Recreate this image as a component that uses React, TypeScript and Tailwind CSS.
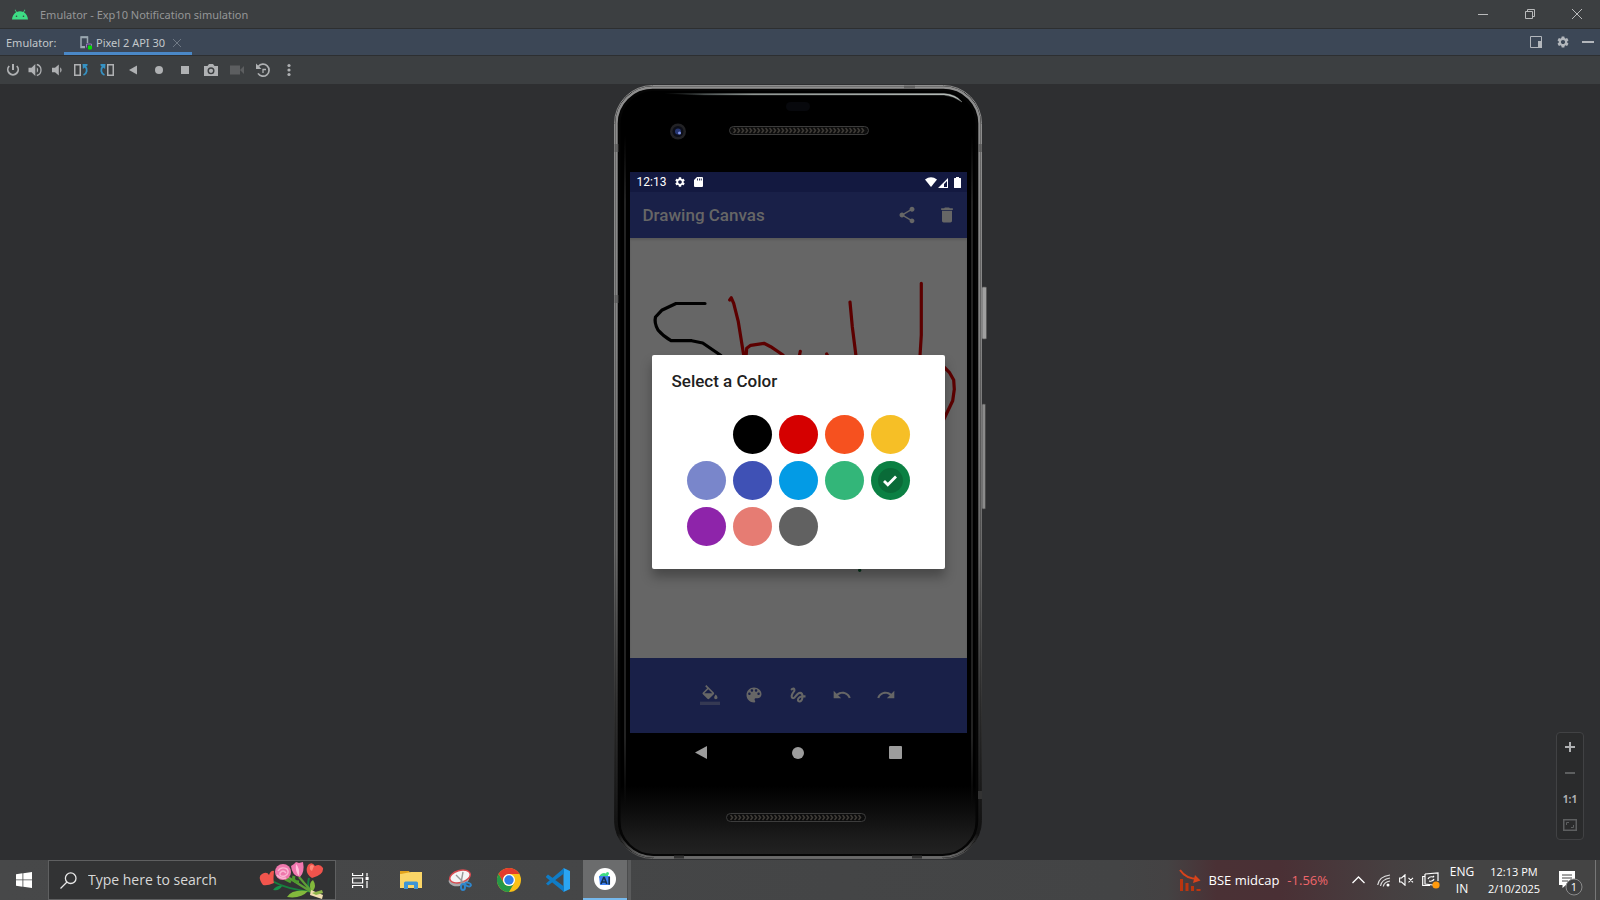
import React from "react";
import { MdDelete, MdGesture, MdRedo, MdSettings, MdShare, MdUndo } from "react-icons/md";

const swatches = [
  { name: "White", color: "bg-white" },
  { name: "Black", color: "bg-black" },
  { name: "Red", color: "bg-[#d50000]" },
  { name: "Orange", color: "bg-[#f6511f]" },
  { name: "Yellow", color: "bg-[#f6bf26]" },
  { name: "Lavender", color: "bg-[#7986cb]" },
  { name: "Indigo", color: "bg-[#3f51b5]" },
  { name: "Blue", color: "bg-[#039be5]" },
  { name: "Mint", color: "bg-[#33b679]" },
  { name: "Green", color: "bg-[#0b8043]", selected: true },
  { name: "Purple", color: "bg-[#8e24aa]" },
  { name: "Salmon", color: "bg-[#e67c73]" },
  { name: "Graphite", color: "bg-[#616161]" },
];

function AndroidLogo() {
  return (
    <svg width="16" height="11" viewBox="0 0 16 11" aria-hidden="true">
      <path d="M0 10.500C.2 7.300 1.800 4.700 4.100 3.300L2.700.9l.6-.4 1.500 2.500a8 8 0 0 1 6.400 0L12.700.5l.6.4-1.400 2.400c2.300 1.400 3.900 4 4.100 7.200z" fill="#3ddc84" />
      <circle cx="4.500" cy="7.200" r=".8" fill="#3c3f41" />
      <circle cx="11.500" cy="7.200" r=".8" fill="#3c3f41" />
    </svg>
  );
}

function TitleBar() {
  return (
    <header className="flex h-[29px] items-center border-b border-[#2d2f30] bg-[#3c3f41] pl-3">
      <AndroidLogo />
      <h1 className="ml-3 flex-1 pt-px font-['Noto_Sans',sans-serif] text-[11px] leading-4 text-[#959697]">Emulator - Exp10 Notification simulation</h1>
      <button type="button" aria-label="Minimize window" className="flex h-7 w-[47px] items-center justify-center">
        <span className="h-px w-2.5 bg-[#b9babb]" />
      </button>
      <button type="button" aria-label="Restore window" className="flex h-7 w-[47px] items-center justify-center">
        <svg width="10" height="10" viewBox="0 0 10 10" fill="none" stroke="#b9babb">
          <path d="M.5 2.500h7v7h-7zM2.500 2.500v-2h7v7h-2" />
        </svg>
      </button>
      <button type="button" aria-label="Close window" className="flex h-7 w-[47px] items-center justify-center">
        <svg width="10" height="10" viewBox="0 0 10 10" fill="none" stroke="#b9babb">
          <path d="M0 0l10 10M10 0L0 10" />
        </svg>
      </button>
    </header>
  );
}

function TabBar() {
  return (
    <div className="flex h-[27px] items-stretch border-b border-[#2d2f31] bg-[#3c4756] font-['Noto_Sans',sans-serif] text-[11px] leading-4 text-[#c3c7cb]">
      <span className="flex w-16 items-center pl-1.5 pt-0.5">Emulator:</span>
      <div className="flex w-32 items-center border-b-[3px] border-[#4a88c7] pl-4 pt-[5px]">
        <svg width="12" height="14" viewBox="0 0 12 14" aria-hidden="true">
          <path d="M5 11.500H1V1h6.500v6" fill="none" stroke="#9aa7b0" strokeWidth="1.500" />
          <path d="M1 .5h7v1.700H1zM1 10h4v2H1z" fill="#9aa7b0" />
          <path d="M6.500 11.500v-3.500h5v3" fill="none" stroke="#9a6fc0" />
          <rect x="8" y="9.500" width="4" height="4" rx="1" fill="#00e000" />
        </svg>
        <span className="ml-1 flex-1 whitespace-nowrap">Pixel 2 API 30</span>
        <button type="button" aria-label="Close tab" className="mr-2.5 p-px">
          <svg width="8" height="8" viewBox="0 0 8 8" stroke="#6f7985">
            <path d="M0 0l8 8M8 0L0 8" />
          </svg>
        </button>
      </div>
      <div className="flex-1" />
      <div className="flex items-center gap-3.5 pr-1.5">
        <button type="button" aria-label="Window layout">
          <svg width="12" height="12" viewBox="0 0 12 12">
            <path d="M.5.5h11v11H.5z" fill="none" stroke="#b3b7bc" />
            <path d="M8 5h4v7H8z" fill="#b3b7bc" />
          </svg>
        </button>
        <button type="button" aria-label="Settings" className="-mr-0.5">
          <MdSettings className="size-3.5 text-[#b3b7bc]" />
        </button>
        <button type="button" aria-label="Hide" className="py-2">
          <span className="block h-0.5 w-3 bg-[#b3b7bc]" />
        </button>
      </div>
    </div>
  );
}

function ToolButton({ label, children }: { label: string; children: React.ReactNode }) {
  return (
    <button type="button" aria-label={label} className="flex size-4 items-center justify-center">
      <svg width="16" height="16" viewBox="0 0 16 16" fill="#afb1b3">
        {children}
      </svg>
    </button>
  );
}

function EmulatorToolbar() {
  return (
    <div className="flex h-7 items-center gap-2.5 bg-[#3c3f41] pl-[5px]">
      <div className="-mr-0.5 flex items-center gap-1.5">
        <ToolButton label="Power">
          <path d="M7 2h2v6H7z" />
          <path d="M4.200 4a5.200 5.200 0 1 0 7.600 0" fill="none" stroke="#afb1b3" strokeWidth="1.800" />
        </ToolButton>
        <ToolButton label="Volume up">
          <path d="M1.500 5.700h3L8.300 2v12L4.500 10.300h-3z" />
          <path d="M9.800 5.300a3.300 3.300 0 0 1 0 5.400z" />
          <path d="M9.800 2.500a5.700 5.700 0 0 1 0 11" fill="none" stroke="#afb1b3" strokeWidth="1.300" />
        </ToolButton>
        <ToolButton label="Volume down">
          <path d="M3 5.700h3L9.800 2.500v11L6 10.300H3z" />
          <path d="M11.200 5.300a3.300 3.300 0 0 1 0 5.400z" />
        </ToolButton>
      </div>
      <ToolButton label="Rotate left">
        <path d="M1.750 2.750h5.500v10.500h-5.500z" fill="none" stroke="#afb1b3" strokeWidth="1.500" />
        <path d="M10.500 13c3.700-1.600 4.300-6 1.400-9" fill="none" stroke="#3592c4" strokeWidth="1.800" />
        <path d="M9.500 2h5v1.600L9.900 7z" fill="#3592c4" />
      </ToolButton>
      <ToolButton label="Rotate right">
        <path d="M8.750 2.750h5.500v10.500h-5.500z" fill="none" stroke="#afb1b3" strokeWidth="1.500" />
        <path d="M5.500 13C1.800 11.400 1.200 7 4.100 4" fill="none" stroke="#3592c4" strokeWidth="1.800" />
        <path d="M6.500 2h-5v1.600L6.100 7z" fill="#3592c4" />
      </ToolButton>
      <ToolButton label="Back"><path d="M4 8l8-4.500v9z" /></ToolButton>
      <ToolButton label="Home"><circle cx="8" cy="8" r="4" /></ToolButton>
      <ToolButton label="Overview"><path d="M4 4h8v8H4z" /></ToolButton>
      <ToolButton label="Take screenshot">
        <path fillRule="evenodd" d="M1 4h3.500L6 2h4l1.500 2H15v10H1zM8 5.300a3.500 3.500 0 1 0 0 7 3.500 3.500 0 0 0 0-7z" />
        <circle cx="8" cy="8.800" r="2.100" />
      </ToolButton>
      <ToolButton label="Record screen">
        <path d="M1 3.500h10v9H1zM11 8l4-4v8z" fill="#5c5e60" />
      </ToolButton>
      <ToolButton label="Snapshots">
        <path d="M3.300 4.500A6 6 0 1 1 3 11.400" fill="none" stroke="#afb1b3" strokeWidth="1.700" />
        <path d="M1 1.500v5.500h5.500z" />
        <path d="M8 11V7.500h3" fill="none" stroke="#afb1b3" strokeWidth="1.300" />
      </ToolButton>
      <ToolButton label="More">
        <circle cx="8" cy="3.500" r="1.600" /><circle cx="8" cy="8" r="1.600" /><circle cx="8" cy="12.500" r="1.600" />
      </ToolButton>
    </div>
  );
}

function Speaker() {
  return (
    <svg width="140" height="9" viewBox="0 0 140 9" aria-hidden="true">
      <defs>
        <pattern id="mesh" width="4" height="9" patternUnits="userSpaceOnUse">
          <path d="M.5 2l2 2.500-2 2.500" fill="none" stroke="#3f3c37" strokeWidth="1.500" />
        </pattern>
      </defs>
      <rect x=".5" y=".5" width="139" height="8" rx="4" fill="#0c0c0c" stroke="#3c3c3c" />
      <rect x="4" y="0" width="132" height="9" fill="url(#mesh)" />
    </svg>
  );
}

function PhoneBody() {
  return (
    <svg className="absolute inset-0" width="373" height="775" viewBox="0 0 373 775" aria-hidden="true">
      <defs>
        <linearGradient id="rim" x1="0" y1="0" x2="0" y2="1">
          <stop offset="0" stopColor="#8e8e8e" />
          <stop offset=".3" stopColor="#858585" />
          <stop offset=".6" stopColor="#6a6a6a" />
          <stop offset=".8" stopColor="#333" />
          <stop offset=".97" stopColor="#111" />
          <stop offset="1" stopColor="#666" />
        </linearGradient>
        <linearGradient id="glass" x1="0" y1="0" x2="0" y2="1">
          <stop offset=".91" stopColor="#000" />
          <stop offset=".98" stopColor="#1c1c1c" />
          <stop offset="1" stopColor="#222" />
        </linearGradient>
        <linearGradient id="edge" x1="0" y1="0" x2="0" y2="1">
          <stop offset="0" stopColor="#222" stopOpacity="0" />
          <stop offset=".1" stopColor="#222" />
          <stop offset=".9" stopColor="#222" />
          <stop offset="1" stopColor="#222" stopOpacity="0" />
        </linearGradient>
        <linearGradient id="shine" x1="0" x2="1">
          <stop offset="0" stopColor="#9aa" stopOpacity="0" />
          <stop offset=".3" stopColor="#8e9491" />
          <stop offset="1" stopColor="#b5bbb8" />
        </linearGradient>
      </defs>
      <rect x="368" y="202" width="4.500" height="52" rx="1" fill="#a0a0a0" stroke="#555" strokeWidth=".7" />
      <rect x="368" y="319" width="3.500" height="105" rx="1" fill="#8b8b8b" stroke="#444" strokeWidth=".7" />
      <rect x=".5" y=".5" width="367" height="773" rx="38" fill="#111" stroke="url(#rim)" />
      <rect x="2.500" y="2.500" width="363" height="769" rx="36" fill="#050505" stroke="url(#rim)" strokeWidth="2.400" />
      <rect x="5.500" y="5" width="357" height="765" rx="34" fill="url(#glass)" stroke="#050505" strokeWidth="2" />
      <path d="M10 50h2v670h-2zM357 50h2v670h-2z" fill="url(#edge)" />
      <path d="M50 8.500h280q12 .5 18 8.500q-8-6-18-7H90z" fill="url(#shine)" stroke="url(#shine)" strokeWidth=".3" />
      <path d="M.5 59h4v8h-4zM.5 210h4v8h-4zM364 59h4v8h-4zM290 .5h11v3h-11z" fill="#555" fillOpacity=".7" />
      <path d="M364 706h4v8h-4z" fill="#333" />
      <path d="M40 772.500h288" stroke="#6a6a6a" />
      <path d="M60 770.500h10v3H60zM298 770.500h10v3h-10z" fill="#333" />
      <rect x="172" y="17" width="24" height="9" rx="4.500" fill="#07080c" />
      <circle cx="64" cy="46.500" r="8" fill="#222225" />
      <circle cx="64" cy="46.500" r="5.500" fill="#0c0e18" />
      <circle cx="64" cy="46.500" r="3" fill="#263672" />
      <circle cx="65.500" cy="48" r="1.500" fill="#8093e8" />
    </svg>
  );
}

function StatusBar() {
  return (
    <div className="flex h-5 items-center bg-[#131940] pl-[7px] pr-1.5 text-white">
      <span className="font-[Roboto] text-[12px] leading-4">12:13</span>
      <MdSettings className="ml-2 size-3" />
      <svg className="ml-2" width="9" height="10" viewBox="0 0 9 10" fill="#fff" aria-hidden="true">
        <path fillRule="evenodd" d="M3 0h5q1 0 1 1v8q0 1-1 1H1q-1 0-1-1V3zM3 1.500v2h.9v-2zM5 1.500v2h.9v-2zM6.800 1.500v2h.9v-2z" />
      </svg>
      <svg className="ml-auto" width="36" height="11" viewBox="0 0 36 11" fill="#fff" aria-label="Wi-Fi, signal and battery">
        <path d="M0 2.500q6-4.500 12 0L6 10z" />
        <path fillRule="evenodd" d="M13 11L23 1v10zM19 10h3V4l-3 3z" />
        <path d="M31 0h3v1h1.500q.5 0 .5.5v9q0 .5-.5.5h-6q-.5 0-.5-.5v-9q0-.5.5-.5H31z" />
      </svg>
    </div>
  );
}

function CanvasDrawing() {
  return (
    <svg className="absolute inset-0" width="337" height="420" viewBox="0 0 337 420" fill="none" stroke="#5c0000" strokeWidth="3.200" strokeLinecap="round" strokeLinejoin="round" aria-hidden="true">
      <path stroke="#000" d="M75 65.500H46L31.700 72.300 25.500 79Q24 85 28 92 33 98 41 102.700H61.700L72.700 105 91 117.500" />
      <path d="M99.700 62l1.600-2.200 2.400 5.500 4.600 18.400L114 119M116 119l.7-8.700 4-3 13.300-2 6.700 3.400L153 117M170.300 113.300l-1 5M196.700 116l1 2M220 64l2.300 24.700L226 118M291.300 45.300V97L290 118M312 127l7.300 7.300 4.400 7.700.6 9.300-1.600 11.400L313 183" />
      <path stroke="#06351c" d="M229.700 332v.3" />
    </svg>
  );
}

function ColorDialog() {
  return (
    <section role="dialog" aria-label="Select a Color" className="relative mt-[117px] h-[214px] w-[293px] rounded-[2px] bg-white px-5 pt-4 shadow-[0_8px_12px_rgba(0,0,0,0.3)]">
      <h2 className="font-[Roboto] text-[17px] font-medium leading-5 text-[#212121]">Select a Color</h2>
      <div className="mt-6 grid grid-cols-[repeat(5,39px)] justify-center gap-[7px]">
        {swatches.map((s) => (
          <button key={s.name} type="button" aria-label={s.name} aria-pressed={!!s.selected} className={`flex size-[39px] items-center justify-center rounded-full ${s.color}`}>
            {s.selected && (
              <span className="flex size-[25px] items-center justify-center rounded-full bg-[#0a6b38]">
                <svg width="14" height="12" viewBox="0 0 14 12" fill="none" stroke="#fff" strokeWidth="2.800">
                  <path d="M1 6l3.800 3.800L13 1.600" />
                </svg>
              </span>
            )}
          </button>
        ))}
      </div>
    </section>
  );
}

function DrawTool({ label, children }: { label: string; children: React.ReactNode }) {
  return (
    <button type="button" aria-label={label} className="flex h-11 w-11 items-center justify-center text-[#666]">
      {children}
    </button>
  );
}

function DrawingApp() {
  return (
    <div className="flex flex-col font-[Roboto]">
      <StatusBar />
      <div className="flex h-[46px] items-center bg-[#192048] pl-[13px] pr-2.5 text-[#666]">
        <h2 className="flex-1 text-[17px] font-medium leading-5">Drawing Canvas</h2>
        <button type="button" aria-label="Share"><MdShare className="size-5" /></button>
        <button type="button" aria-label="Delete" className="ml-5"><MdDelete className="size-5" /></button>
      </div>
      <div className="relative flex h-[420px] justify-center bg-[#666] shadow-[inset_0_2px_2px_rgba(0,0,0,0.12)]">
        <CanvasDrawing />
        <ColorDialog />
      </div>
      <div className="flex h-[75px] items-center justify-center bg-[#192048] pb-0.5">
        <DrawTool label="Background color">
          <svg width="20" height="20" viewBox="0 0 24 24" fill="currentColor">
            <path d="M16.560 8.940L7.620 0 6.210 1.410l2.380 2.380-5.150 5.150c-.59.59-.59 1.540 0 2.120l5.500 5.500c.29.29.68.44 1.060.44s.77-.15 1.060-.44l5.500-5.500c.59-.58.59-1.530 0-2.120zM5.210 10L10 5.210 14.790 10H5.210zM19 11.500s-2 2.170-2 3.500c0 1.100.9 2 2 2s2-.9 2-2c0-1.330-2-3.500-2-3.500z" />
            <path fillOpacity=".36" d="M0 20h24v4H0z" />
          </svg>
        </DrawTool>
        <DrawTool label="Brush color">
          <svg width="20" height="20" viewBox="0 0 24 24" fill="currentColor">
            <path d="M12 3c-4.970 0-9 4.030-9 9s4.030 9 9 9c.83 0 1.500-.67 1.500-1.500 0-.39-.15-.74-.39-1.010-.23-.26-.38-.61-.38-.99 0-.83.67-1.500 1.500-1.500H16c2.760 0 5-2.240 5-5 0-4.420-4.030-8-9-8zm-5.500 9c-.83 0-1.500-.67-1.500-1.500S5.670 9 6.500 9 8 9.670 8 10.500 7.330 12 6.500 12zm3-4C8.670 8 8 7.330 8 6.500S8.670 5 9.500 5s1.500.67 1.500 1.500S10.330 8 9.500 8zm5 0c-.83 0-1.500-.67-1.500-1.500S13.670 5 14.500 5s1.500.67 1.500 1.500S15.330 8 14.500 8zm3 4c-.83 0-1.500-.67-1.500-1.500S16.670 9 17.500 9s1.500.67 1.500 1.500-.67 1.500-1.500 1.500z" />
          </svg>
        </DrawTool>
        <DrawTool label="Brush size"><MdGesture className="size-5" /></DrawTool>
        <DrawTool label="Undo"><MdUndo className="size-5" /></DrawTool>
        <DrawTool label="Redo"><MdRedo className="size-5" /></DrawTool>
      </div>
      <nav className="flex h-[39px] items-center justify-center text-[#9c9c9c]">
        <button type="button" aria-label="Back" className="flex w-[97px] justify-center">
          <svg width="12" height="13" viewBox="0 0 12 13" fill="currentColor"><path d="M0 6.500L12 0v13z" /></svg>
        </button>
        <button type="button" aria-label="Home" className="flex w-[97px] justify-center">
          <span className="size-3 rounded-full bg-[#9c9c9c]" />
        </button>
        <button type="button" aria-label="Recent apps" className="flex w-[97px] justify-center">
          <span className="size-[13px] rounded-[1px] bg-[#9c9c9c]" />
        </button>
      </nav>
    </div>
  );
}

function Phone() {
  return (
    <div className="relative flex h-[775px] w-[373px] flex-col items-start">
      <PhoneBody />
      <div className="relative ml-4 flex h-[87px] w-[339px] justify-center pt-[41px]">
        <Speaker />
      </div>
      <div className="relative ml-4 w-[337px]">
        <DrawingApp />
      </div>
      <div className="relative ml-3 mt-[41px] flex w-[340px] justify-center">
        <Speaker />
      </div>
    </div>
  );
}

function ZoomPanel() {
  return (
    <div className="absolute bottom-5 right-4 flex w-7 flex-col items-center rounded border border-[#414244] bg-[#2a2b2c] py-px text-[#afb1b3]">
      <button type="button" aria-label="Zoom in" className="flex h-[26px] w-full items-center justify-center">
        <svg width="10" height="10" viewBox="0 0 10 10" fill="currentColor"><path d="M4 0h2v4h4v2H6v4H4V6H0V4h4z" /></svg>
      </button>
      <button type="button" aria-label="Zoom out" className="flex h-[26px] w-full items-center justify-center">
        <span className="h-0.5 w-2.5 bg-[#5d5f60]" />
      </button>
      <button type="button" className="flex h-[26px] w-full items-center justify-center font-['Open_Sans'] text-[10px] font-bold leading-3">1:1</button>
      <button type="button" aria-label="Zoom to fit" className="flex h-[26px] w-full items-center justify-center">
        <svg width="14" height="12" viewBox="0 0 14 12" fill="none" stroke="#5d5f60">
          <path d="M.75.75h12.500v10.500H.75z" strokeWidth="1.500" />
          <path d="M3.500 6V3.500H6M8 8.500h2.500V6" />
        </svg>
      </button>
    </div>
  );
}

function Bouquet() {
  return (
    <svg width="66" height="37" viewBox="0 0 66 37" aria-hidden="true">
      <path d="M13 19q16 9 42 11M50 16q-2 7 1 13" fill="none" stroke="#17803e" strokeWidth="2" />
      <path d="M27 14l27 17M40 15l13 15" fill="none" stroke="#5d9e37" strokeWidth="2.200" />
      <path d="M28 35q5-8 21-6-7 8-21 6zM52 29q-3-8 2-11 4 6 0 11z" fill="#83b93c" />
      <path d="M14 28q4-5 9-4-2 5-9 4z" fill="#16924a" />
      <path d="M35 14q-2 6 5 6M26 17l6 3" stroke="#4e9a2e" strokeWidth="3" fill="none" />
      <path d="M52 28l12 5-1 4-12-4z" fill="#f2dfb2" />
      <path d="M53 31l10-3 1 3-7 2z" fill="#8fb64a" />
      <path d="M4 23Q-2 15 3 12q5-3 7 1 2-5 5-4-1 10 0 12-7 3-11 2z" fill="#f2554d" />
      <path d="M49 3q4-4 7 1 5-3 8 2 1 7-11 10-8-5-4-13z" fill="#f0534c" />
      <path d="M51 4q2-2 4 0l-2 5q-3-1-2-5z" fill="#ff8778" />
      <circle cx="24" cy="10" r="8" fill="#ef78ac" />
      <path d="M19 9q3-5 9-2 3 4-2 7-6 1-5-3 3-4 6 0M18 13q3 4 9 3" fill="none" stroke="#fbb6d2" strokeWidth="1.400" />
      <path d="M32 4l3 -2 2-2 3 1 4-1q2 10-3 15-8-1-9-11z" fill="#f178b0" />
      <path d="M37 2q4 4 3 12-4-4-3-12z" fill="#ffc0dc" />
    </svg>
  );
}

function TaskButton({ label, children }: { label: string; children: React.ReactNode }) {
  return (
    <button type="button" aria-label={label} className="flex h-10 w-[49px] items-center justify-center">
      {children}
    </button>
  );
}

function Taskbar() {
  return (
    <footer className="flex h-10 items-center bg-[linear-gradient(90deg,#474849_0%,#434445_70%,#444243_73%,#4a3135_76%,#4a3035_80%,#464041_87%,#444_90%)] font-['Open_Sans',sans-serif] text-white">
      <button type="button" aria-label="Start" className="flex h-10 w-12 items-center justify-center">
        <svg width="16" height="16" viewBox="0 0 16 16" fill="#fff"><path d="M0 2.300L6.500 1.300v6.200H0zM7.300 1.200L16 0v7.500H7.300zM0 8.300h6.500v6.400L0 13.700zM7.300 8.300H16V16l-8.700-1.200z" /></svg>
      </button>
      <label className="flex h-10 w-[288px] items-center border border-[#5f6061] bg-[#323334] pl-[11px] pr-2.5">
        <svg width="17" height="17" viewBox="0 0 17 17" fill="none" stroke="#e8e8e8" strokeWidth="1.300">
          <circle cx="10.700" cy="6.200" r="5.300" /><path d="M7 10L.5 16.500" />
        </svg>
        <input aria-label="Search" placeholder="Type here to search" className="ml-[11px] w-40 bg-transparent text-[14px] leading-5 outline-none placeholder:text-[#d8d8d8]" />
        <span className="ml-auto"><Bouquet /></span>
      </label>
      <TaskButton label="Task view">
        <svg width="17" height="15" viewBox="0 0 17 15" fill="none" stroke="#fff" strokeWidth="1.200">
          <path d="M.6 0v2.500h10V0M.6 15v-2.500h10V15M.6 5h10v5H.6zM15 0v3.500M15 8v7" />
          <path d="M13.600 4h3v3h-3z" fill="#fff" stroke="none" />
        </svg>
      </TaskButton>
      <div className="ml-px flex">
        <TaskButton label="File Explorer">
          <svg width="22" height="18" viewBox="0 0 22 18">
            <path d="M0 0h9l1 2v4H0z" fill="#e3a31b" /><path d="M1 3l10-2h11v16H0V3z" fill="#fbd667" />
            <path d="M4 18v-6q0-1.500 1.500-1.500h11q1.500 0 1.500 1.500v6h-4v-4H8v4z" fill="#3e95d6" />
          </svg>
        </TaskButton>
        <TaskButton label="Snipping Tool">
          <svg width="24" height="22" viewBox="0 0 24 22" fill="none">
            <ellipse cx="11" cy="10.500" rx="10.500" ry="6.500" transform="rotate(-14 11 10.500)" fill="#a9a9ab" />
            <ellipse cx="12" cy="7.500" rx="10.500" ry="6" transform="rotate(-16 12 7.500)" fill="#f5f5f5" stroke="#d94a4f" strokeWidth="1.500" />
            <path d="M8 6l9 9M15 3l-2 11" stroke="#999" strokeWidth="1.400" />
            <ellipse cx="15" cy="18" rx="2" ry="3" stroke="#2f86cc" strokeWidth="2" /><ellipse cx="20" cy="15.500" rx="3" ry="1.700" transform="rotate(20 20 15.500)" stroke="#2f86cc" strokeWidth="2" />
          </svg>
        </TaskButton>
        <TaskButton label="Chrome">
          <svg width="24" height="24" viewBox="0 0 24 24">
            <circle cx="12" cy="12" r="12" fill="#fbc116" />
            <path d="M1.600 6A12 12 0 0 1 22.400 6H12a6 6 0 0 0-5.200 9z" fill="#e33b2e" />
            <path d="M1.600 6A12 12 0 0 0 12 24l5.200-9A6 6 0 0 1 6.800 15z" fill="#279847" />
            <circle cx="12" cy="12" r="6" fill="#fff" /><circle cx="12" cy="12" r="4.700" fill="#2f7de9" />
          </svg>
        </TaskButton>
        <TaskButton label="Visual Studio Code">
          <svg width="24" height="24" viewBox="0 0 24 24">
            <path d="M17.500 0L24 3v18l-6.500 3z" fill="#2aa5f2" />
            <path d="M0 8.500l2-2 16 12V24L.2 9.500zM18 0v5.500L2 17.500l-2-2z" fill="#0f7cc6" />
          </svg>
        </TaskButton>
      </div>
      <button type="button" aria-label="Android Studio" className="ml-px flex h-10 w-11 items-center justify-center border-b-2 border-[#76b9ed] bg-[#6b6c6d]">
        <svg width="22" height="22" viewBox="0 0 22 22">
          <circle cx="11" cy="11" r="11" fill="#fff" />
          <path d="M6 7q4-4 8 0v3H5z" fill="#3ddc84" /><path d="M5 8h11v9H6z" fill="#3e7ff0" />
          <path d="M7 16L9.700 9.500h.6L12.800 16M8 14h4M15.200 9v7.500" fill="none" stroke="#153250" strokeWidth="1.700" />
          <circle cx="13.500" cy="5.500" r="1.500" fill="#3ddc84" />
        </svg>
      </button>
      <span className="h-10 w-1 border-l border-[#4b4c4d] bg-[#5a5b5c]" />
      <div className="flex-1" />
      <button type="button" className="flex h-10 items-center text-[13px] leading-5">
        <svg width="22" height="22" viewBox="0 0 22 22" fill="none">
          <path d="M1 1q6 9 18 9" stroke="#d8431b" strokeWidth="2" /><path d="M16 6l5.500 5.500L14 14z" fill="#d8431b" />
          <path d="M1 10h3v12H1zM6.500 14h3v8h-3zM12 17h3v5h-3zM17.500 20h4v2h-4z" fill="#bb350f" />
        </svg>
        <span className="ml-2">BSE midcap</span>
        <span className="ml-2 text-[#f0666b]">-1.56%</span>
      </button>
      <div className="ml-6 flex items-center gap-2">
        <button type="button" aria-label="Show hidden icons">
          <svg width="13" height="8" viewBox="0 0 13 8" fill="none" stroke="#fff" strokeWidth="1.300"><path d="M.5 7l6-6 6 6" /></svg>
        </button>
        <button type="button" aria-label="Wi-Fi" className="ml-1">
          <svg width="14" height="13" viewBox="0 0 14 13" fill="none" stroke="#ddd" strokeWidth="1.200">
            <path d="M.7 11Q2 2.500 13 1M3.500 12Q4.500 5.500 13 4M6.300 12.500Q7 8 13 7" /><circle cx="11" cy="11" r="1.500" fill="#fff" stroke="none" />
          </svg>
        </button>
        <button type="button" aria-label="Volume muted">
          <svg width="15" height="12" viewBox="0 0 15 12" fill="none" stroke="#fff" strokeWidth="1.100"><path d="M.6 4h2L6 .8v10.400L2.600 8h-2zM9.500 3.800l4.500 4.500M14 3.800L9.500 8.300" /></svg>
        </button>
        <button type="button" aria-label="Update status">
          <svg width="18" height="17" viewBox="0 0 18 17" fill="none" stroke="#fff" strokeWidth="1.200">
            <path d="M3 2L16 .8V9M3 2v10l8 1M3 4.500H.7v9H8" /><path d="M6 7q1-3 5-2l1-1M12 7q-1 3-5 2" /><circle cx="14" cy="13" r="3.600" fill="#ff9a0c" stroke="none" />
          </svg>
        </button>
      </div>
      <button type="button" className="ml-2 w-7 text-center text-[12px] leading-[17px]">ENG<br />IN</button>
      <button type="button" className="ml-2 w-[60px] whitespace-nowrap text-center text-[11px] leading-[17px]">12:13 PM<br />2/10/2025</button>
      <button type="button" aria-label="Notifications" className="ml-[15px] flex h-10 w-9 items-center pt-1.5">
        <svg width="24" height="25" viewBox="0 0 24 25">
          <path d="M0 0h16v14H7l-3.500 3V14H0z" fill="#fff" /><path d="M3 4h10M3 7h10M3 10h6" stroke="#444" />
          <circle cx="15" cy="16" r="8" fill="#3e3f40" stroke="#8b8b8b" />
          <text x="15" y="20" textAnchor="middle" fill="#fff" fontSize="11" fontFamily="Open Sans">1</text>
        </svg>
      </button>
      <span className="mr-1 h-10 w-px bg-[#777]" />
    </footer>
  );
}

export default function App() {
  return (
    <div className="flex min-h-screen flex-col bg-[#2e2f31] font-['Open_Sans',sans-serif]">
      <TitleBar />
      <TabBar />
      <EmulatorToolbar />
      <main className="relative flex flex-1 justify-center pt-px">
        <Phone />
        <ZoomPanel />
      </main>
      <Taskbar />
    </div>
  );
}
